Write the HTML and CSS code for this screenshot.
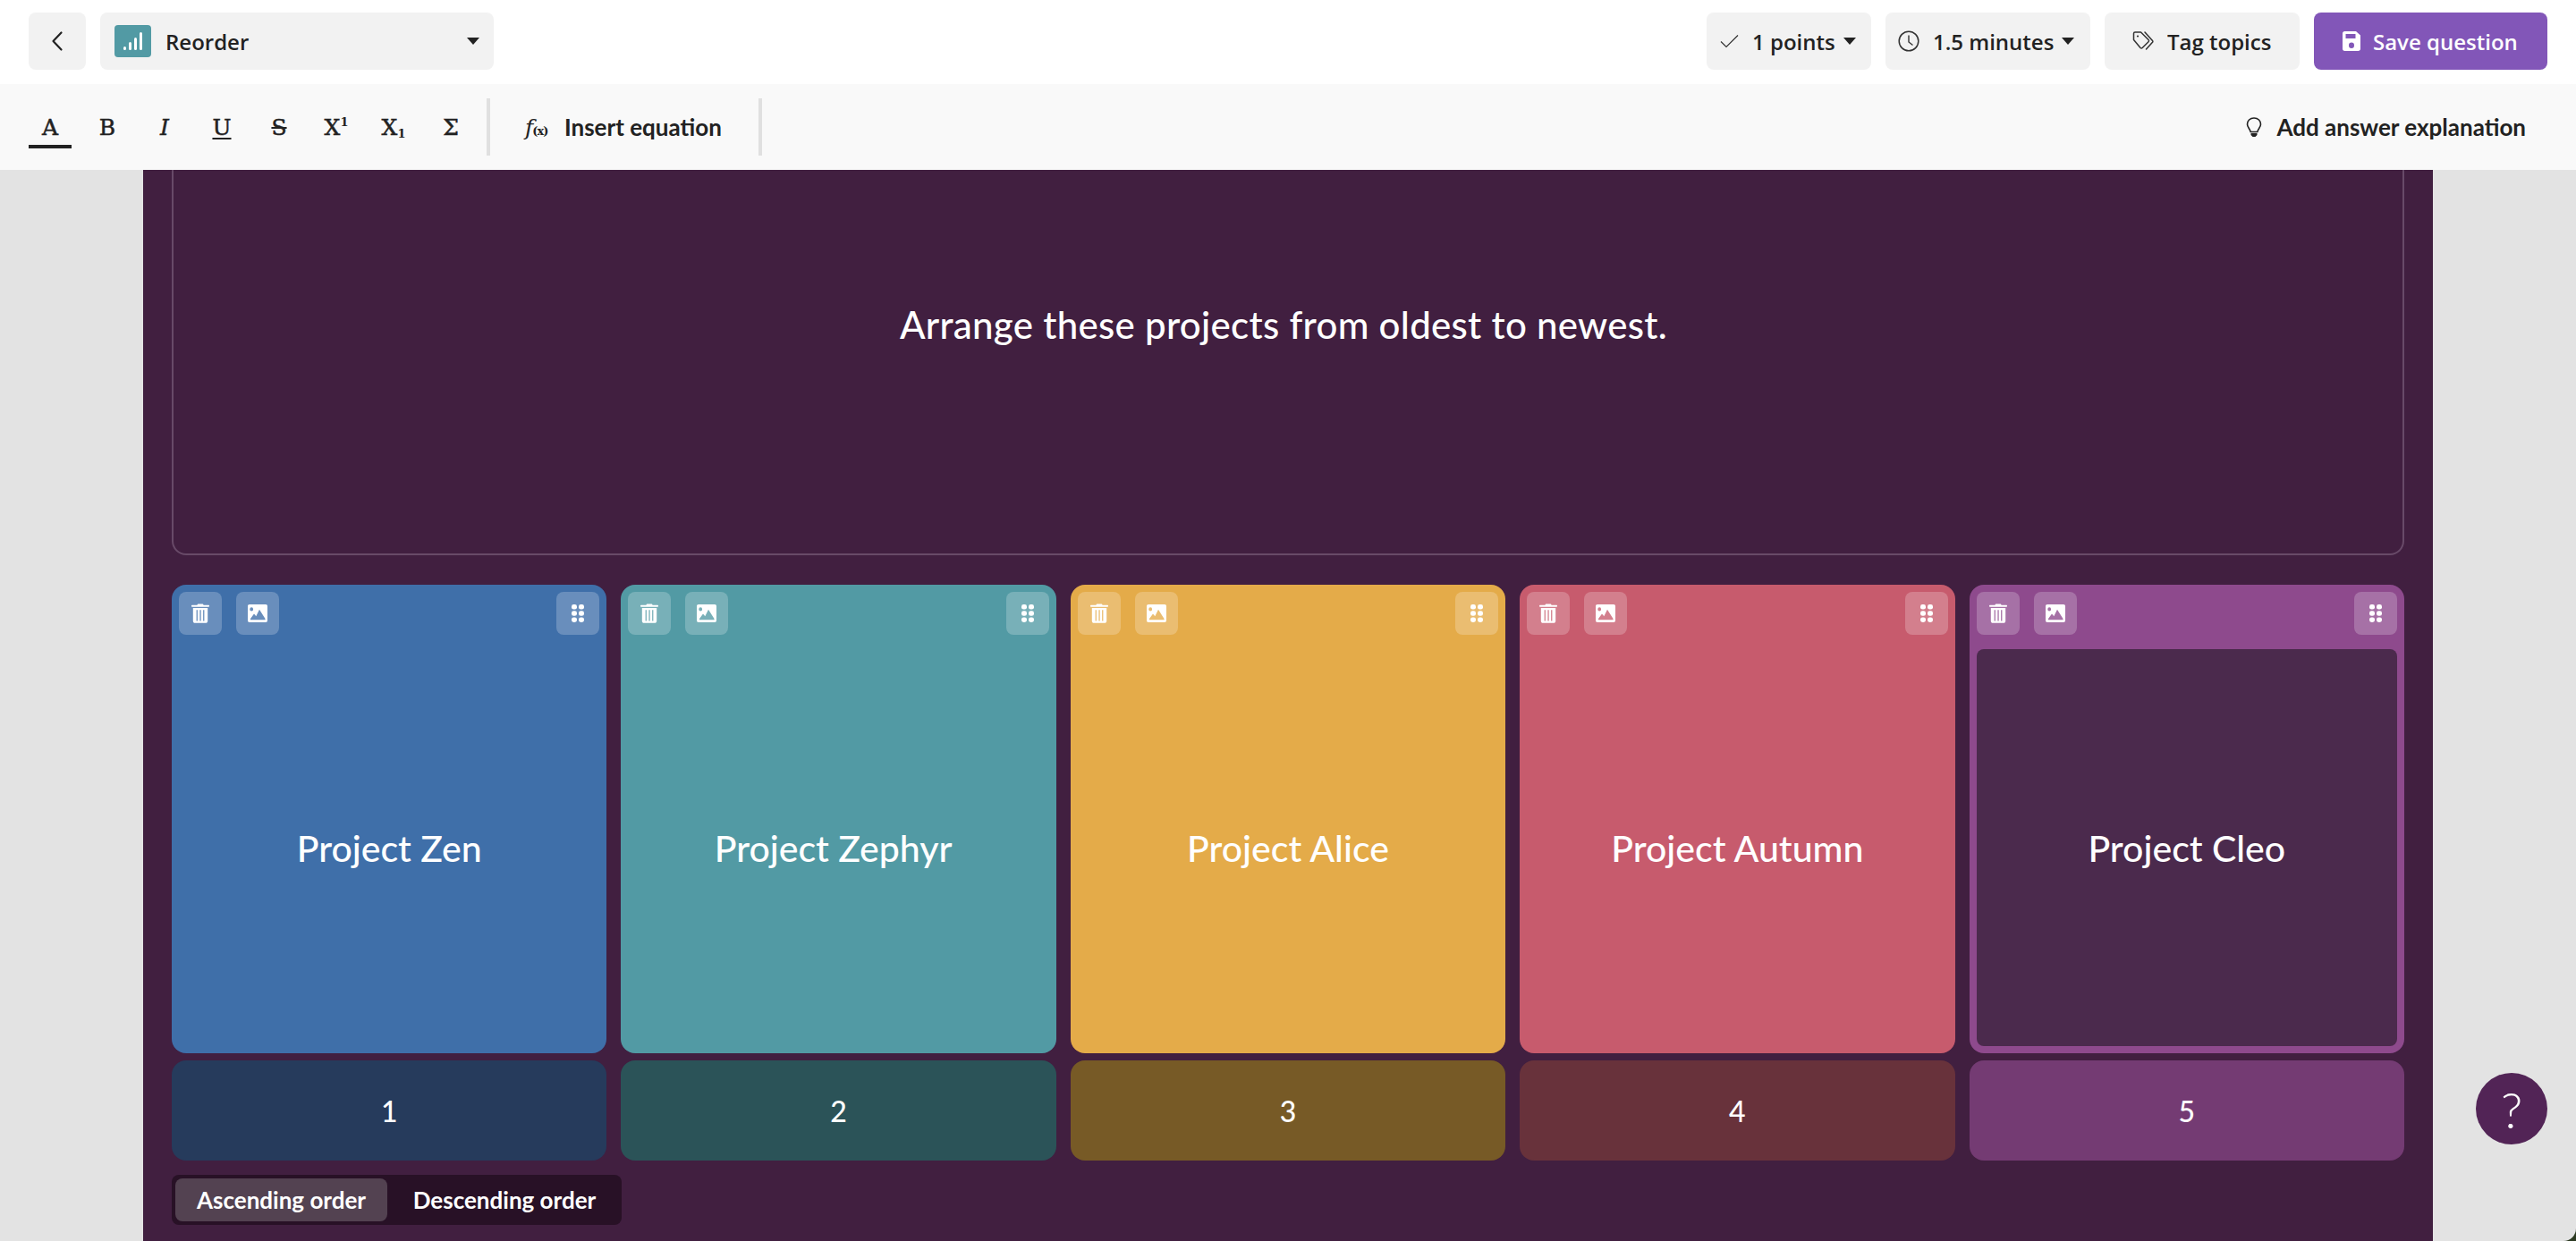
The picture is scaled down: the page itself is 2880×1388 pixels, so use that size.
FILE: index.html
```html
<!DOCTYPE html>
<html lang="en">
<head>
<meta charset="utf-8">
<title>Reorder</title>
<link rel="stylesheet" href="styles.css">
</head>
<body>
<svg class="defs" width="0" height="0" aria-hidden="true">
  <symbol id="i-trash" viewBox="0 0 20 22"><path fill="currentColor" d="M6.500 1.800C6.500.8 7.200.4 8 .4h4c.8 0 1.500.4 1.500 1.400H19c.6 0 1 .4 1 1s-.4 1-1 1H1c-.6 0-1-.4-1-1s.4-1 1-1z"/><path fill="currentColor" fill-rule="evenodd" d="M1.800 5h16.400v14.500c0 1.500-.9 2.300-2.300 2.300H4.100c-1.400 0-2.300-.8-2.300-2.300zM5.600 7.200v12.300h1.300V7.200zm3.800 0v12.300h1.300V7.200zm3.700 0v12.300h1.300V7.200z"/></symbol>
  <symbol id="i-image" viewBox="0 0 22 20"><path fill="currentColor" fill-rule="evenodd" d="M2 0h18c1.300 0 2 .7 2 2v16c0 1.300-.7 2-2 2H2c-1.300 0-2-.7-2-2V2C0 .7.700 0 2 0zM4.200 3.300a1.900 2.100 0 1 0 0 4.200 1.900 2.100 0 1 0 0-4.200zM3 17.300h16.500v-1.200L13 5.800l-3.700 7.500-2.300-2.800-4 5.500z"/></symbol>
  <symbol id="i-grip" viewBox="0 0 14 20"><g fill="currentColor"><rect x="0" y="0" width="6" height="5.600" rx="2.400"/><rect x="8" y="0" width="6" height="5.600" rx="2.400"/><rect x="0" y="7.200" width="6" height="5.600" rx="2.400"/><rect x="8" y="7.200" width="6" height="5.600" rx="2.400"/><rect x="0" y="14.400" width="6" height="5.600" rx="2.400"/><rect x="8" y="14.400" width="6" height="5.600" rx="2.400"/></g></symbol>
</svg>

<div class="window">
  <header class="topbar">
    <div class="group">
      <button class="btn btn-back" aria-label="Back"><svg width="14" height="24" viewBox="0 0 14 24"><path d="M11.500 2.500 2.500 12l9 9.500" fill="none" stroke="#222" stroke-width="2.200" stroke-linecap="round" stroke-linejoin="round"/></svg></button>
      <button class="btn btn-type">
        <span class="type-icon"><svg width="26" height="24" viewBox="0 0 26 24"><g fill="#fff"><rect x="2" y="18" width="3" height="4" rx="1.500"/><rect x="8" y="13" width="3" height="9" rx="1.500"/><rect x="14" y="8" width="3" height="14" rx="1.500"/><rect x="20" y="2" width="3" height="20" rx="1.500"/></g></svg></span>
        <span class="type-label">Reorder</span>
        <span class="caret caret-type"></span>
      </button>
    </div>
    <div class="group group-right">
      <button class="btn btn-points"><svg width="21" height="16" viewBox="0 0 21 16"><path d="M1 8.500 7 14.500 20 1.500" fill="none" stroke="#333" stroke-width="1.200"/></svg><span>1 points</span><span class="caret"></span></button>
      <button class="btn btn-time"><svg width="24" height="24" viewBox="0 0 24 24"><circle cx="12" cy="12" r="10.800" fill="none" stroke="#333" stroke-width="1.500"/><path d="M12 5.500V13l4.500 3.500" fill="none" stroke="#333" stroke-width="1.400"/></svg><span>1.5 minutes</span><span class="caret"></span></button>
      <button class="btn btn-tag"><svg width="24" height="22" viewBox="0 0 24 22"><path d="M1.500 2.500C1.500 1.500 2 1 3 1h6.500L18 9.500c.7.700.7 1.500 0 2.200l-6.800 6.800c-.7.700-1.500.7-2.200 0L1.500 9.500z" fill="none" stroke="#333" stroke-width="1.500" stroke-linejoin="round"/><path d="M14 1l8.500 9.500c.5.600.5 1.200 0 1.800L15.500 20" fill="none" stroke="#333" stroke-width="1.500" stroke-linecap="round"/><circle cx="6" cy="5.500" r="1.100" fill="#333"/></svg><span>Tag topics</span></button>
      <button class="btn btn-save"><svg width="20" height="22" viewBox="0 0 20 22"><path fill="#fff" fill-rule="evenodd" d="M2.500 0H15l5 4.500v15c0 1.600-.9 2.500-2.500 2.500h-15C.9 22 0 21.100 0 19.500v-17C0 .9.900 0 2.500 0zM3.500 3v5h11V3zM10 12.500a3 3.200 0 1 0 0 6.400 3 3.200 0 1 0 0-6.400z"/></svg><span>Save question</span></button>
    </div>
  </header>

  <div class="toolbar">
    <div class="tools">
      <span class="tool tool-active">A</span>
      <span class="tool">B</span>
      <span class="tool ital">I</span>
      <span class="tool under">U</span>
      <span class="tool strike">S</span>
      <span class="tool">X<sup>1</sup></span>
      <span class="tool">X<sub>1</sub></span>
      <span class="tool">Σ</span>
    </div>
    <span class="sep"></span>
    <div class="equation"><span class="fx"><i>f</i><small>(x)</small></span><span>Insert equation</span></div>
    <span class="sep"></span>
    <div class="explain"><svg width="18" height="22" viewBox="0 0 18 22"><path d="M9 1C4.500 1 1.500 4 1.500 8c0 3.300 3 5 3.700 8.500h7.600C13.500 13 16.500 11.300 16.500 8 16.500 4 13.500 1 9 1z" fill="none" stroke="#222" stroke-width="1.600"/><path d="M5.500 18h7v2l-2 2h-3l-2-2z" fill="#222"/></svg><span>Add answer explanation</span></div>
  </div>

  <main class="canvas">
    <section class="stage">
      <div class="question"><p>Arrange these projects from oldest to newest.</p></div>
      <div class="options">
        <article class="option blue">
          <div class="card">
            <div class="actions"><span class="act"><svg class="ic ic-trash"><use href="#i-trash"/></svg></span><span class="act"><svg class="ic ic-image"><use href="#i-image"/></svg></span><span class="act act-end"><svg class="ic ic-grip"><use href="#i-grip"/></svg></span></div>
            <div class="card-text">Project Zen</div>
          </div>
          <div class="num">1</div>
        </article>
        <article class="option teal">
          <div class="card">
            <div class="actions"><span class="act"><svg class="ic ic-trash"><use href="#i-trash"/></svg></span><span class="act"><svg class="ic ic-image"><use href="#i-image"/></svg></span><span class="act act-end"><svg class="ic ic-grip"><use href="#i-grip"/></svg></span></div>
            <div class="card-text">Project Zephyr</div>
          </div>
          <div class="num">2</div>
        </article>
        <article class="option amber">
          <div class="card">
            <div class="actions"><span class="act"><svg class="ic ic-trash"><use href="#i-trash"/></svg></span><span class="act"><svg class="ic ic-image"><use href="#i-image"/></svg></span><span class="act act-end"><svg class="ic ic-grip"><use href="#i-grip"/></svg></span></div>
            <div class="card-text">Project Alice</div>
          </div>
          <div class="num">3</div>
        </article>
        <article class="option rose">
          <div class="card">
            <div class="actions"><span class="act"><svg class="ic ic-trash"><use href="#i-trash"/></svg></span><span class="act"><svg class="ic ic-image"><use href="#i-image"/></svg></span><span class="act act-end"><svg class="ic ic-grip"><use href="#i-grip"/></svg></span></div>
            <div class="card-text">Project Autumn</div>
          </div>
          <div class="num">4</div>
        </article>
        <article class="option violet">
          <div class="card">
            <div class="actions"><span class="act"><svg class="ic ic-trash"><use href="#i-trash"/></svg></span><span class="act"><svg class="ic ic-image"><use href="#i-image"/></svg></span><span class="act act-end"><svg class="ic ic-grip"><use href="#i-grip"/></svg></span></div>
            <div class="card-text card-text-inset">Project Cleo</div>
          </div>
          <div class="num">5</div>
        </article>
      </div>
      <div class="order-toggle"><span class="order order-on">Ascending order</span><span class="order">Descending order</span></div>
    </section>
    <button class="help" aria-label="Help">?</button>
  </main>
</div>
</body>
</html>
```
FILE: styles.css
```css
* { box-sizing: border-box; }
html, body { margin: 0; height: 100%; overflow: hidden; background: #2c3a22; }
.defs { position: absolute; }
.window { height: 1388px; display: flex; flex-direction: column; background: #e3e3e3; border-bottom-right-radius: 14px; overflow: hidden; }
button { border: 0; font: inherit; color: inherit; }

.topbar { height: 94px; flex: none; background: #fff; display: flex; justify-content: space-between; align-items: flex-start; padding: 14px 32px; font-family: "Open Sans", "Noto Sans", sans-serif; font-size: 24px; font-weight: 600; color: #222; }
.group { display: flex; gap: 16px; }
.btn { height: 64px; border-radius: 8px; background: #f2f2f2; display: flex; align-items: center; padding: 0; white-space: nowrap; flex: none; }
.btn-back { width: 64px; justify-content: center; }
.btn-type { width: 440px; padding: 0 16px; }
.type-icon { width: 41px; height: 36px; border-radius: 4px; background: #529aa4; display: flex; align-items: center; justify-content: center; }
.type-label { margin-left: 16px; flex: 1; text-align: left; }
.caret { width: 0; height: 0; border-left: 7px solid transparent; border-right: 7px solid transparent; border-top: 8px solid #222; margin-left: -6px; }
.caret-type { margin-left: 0; }
.btn-points { width: 184px; padding-left: 15px; gap: 15px; }
.btn-time { width: 229px; padding-left: 14px; gap: 15px; }
.btn-tag { width: 218px; padding-left: 31px; gap: 15px; }
.btn-save { width: 261px; padding-left: 32px; gap: 14px; background: #8256b8; color: #fff; }

.toolbar { height: 96px; flex: none; background: #f9f9f9; display: flex; align-items: center; padding-left: 32px; padding-right: 56px; font-family: Lato, "Noto Sans", sans-serif; font-size: 26px; font-weight: 700; color: #222; }
.tools { display: flex; gap: 16px; align-items: flex-start; }
.tool { width: 48px; height: 48px; display: flex; align-items: center; justify-content: center; font-family: "DejaVu Serif", serif; font-size: 25px; font-weight: 400; position: relative; -webkit-text-stroke: .5px #222; }
.tool sup, .tool sub { font-size: 13px; font-weight: 700; line-height: 1; -webkit-text-stroke: 0; }
.tool sup { margin-top: -12px; }
.tool sub { margin-top: 14px; }
.ital { font-style: italic; }
.under { text-decoration: underline; text-decoration-thickness: 2px; text-underline-offset: 3px; }
.strike { text-decoration: line-through; text-decoration-thickness: 2px; }
.tool-active::after { content: ""; position: absolute; left: 0; right: 0; bottom: 0; height: 4px; background: #222; }
.sep { width: 4px; height: 64px; background: #e0e0e0; flex: none; }
.tools + .sep { margin-left: 16px; }
.equation { width: 300px; display: flex; align-items: center; padding-left: 39px; gap: 16px; white-space: nowrap; }
.fx { font-family: "DejaVu Serif", serif; font-weight: 400; font-size: 25px; white-space: nowrap; width: 28px; letter-spacing: -1px; }
.fx small { font-size: 13px; font-style: normal; font-weight: 700; }
.explain { margin-left: auto; display: flex; align-items: center; gap: 16px; }

.canvas { flex: 1; position: relative; min-height: 0; display: flex; justify-content: center; }
.stage { width: 2560px; height: 100%; background: #411f40; padding: 0 32px; display: flex; flex-direction: column; }
.question { height: 431px; flex: none; border: 2px solid #684a68; border-top: 0; border-radius: 0 0 16px 16px; display: flex; align-items: center; justify-content: center; padding: 0 10px 83px 0; color: #fff; font-family: Lato, "Noto Sans", sans-serif; font-size: 42px; letter-spacing: .3px; font-weight: 500; }
.question p { margin: 0; }
.options { margin-top: 33px; display: grid; grid-template-columns: repeat(5, 1fr); gap: 16px; }
.option { display: flex; flex-direction: column; gap: 8px; }
.card { height: 524px; border-radius: 16px; padding: 8px; display: flex; flex-direction: column; color: #fff; }
.actions { height: 48px; flex: none; display: flex; gap: 16px; }
.act { width: 48px; height: 48px; border-radius: 8px; background: rgba(255,255,255,.22); display: flex; align-items: center; justify-content: center; }
.act-end { margin-left: auto; }
.ic { color: #fff; }
.ic-trash { width: 20px; height: 22px; }
.ic-image { width: 22px; height: 20px; }
.ic-grip { width: 14px; height: 20px; }
.card-text { flex: 1; margin-top: 16px; display: flex; align-items: center; justify-content: center; font-family: Lato, "Noto Sans", sans-serif; font-size: 41px; font-weight: 500; }
.teal .card-text { padding-right: 12px; }
.card-text-inset { background: #4b2a4d; border-radius: 8px; }
.num { height: 112px; border-radius: 16px; display: flex; align-items: center; justify-content: center; color: #fff; font-family: Lato, "Noto Sans", sans-serif; font-size: 32px; font-weight: 500; }
.blue .card { background: #3f6fa9; } .blue .num { background: #263b5c; }
.teal .card { background: #529aa4; } .teal .num { background: #2b5358; }
.amber .card { background: #e4ab49; } .amber .num { background: #775a26; }
.rose .card { background: #c75b6d; } .rose .num { background: #68323b; }
.violet .card { background: #8e4a8d; } .violet .num { background: #743b73; }

.order-toggle { margin-top: 16px; width: 503px; height: 56px; padding: 4px; display: flex; background: #281126; border-radius: 8px; color: #fff; font-family: Lato, "Noto Sans", sans-serif; font-size: 26px; font-weight: 700; }
.order { height: 48px; display: flex; align-items: center; justify-content: center; border-radius: 8px; flex: none; white-space: nowrap; }
.order:first-child { width: 237px; }
.order:last-child { width: 258px; margin-left: 2px; }
.order-on { background: #534251; }
.help { position: absolute; left: 2768px; top: 1010px; width: 80px; height: 80px; border-radius: 50%; background: #522456; color: #fff; font-family: Lato, sans-serif; font-size: 56px; font-weight: 300; display: flex; align-items: center; justify-content: center; padding: 0; }
```
